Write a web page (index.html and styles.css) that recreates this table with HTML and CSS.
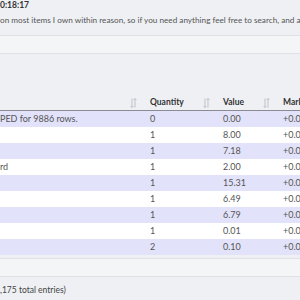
FILE: index.html
```html
<!DOCTYPE html>
<html>
<head>
<meta charset="utf-8">
<link rel="stylesheet" href="styles.css">
</head>
<body>
<div class="top">
  <div class="time">0:18:17</div>
  <div class="desc">on most items I own within reason, so if you need anything feel free to search, and ask</div>
</div>
<div class="band"></div>
<div class="gap"></div>
<table class="grid">
  <thead>
    <tr>
      <th class="c-name"><span class="lbl"></span><svg class="sort" viewBox="0 0 7 10"><path d="M2 0.5V9.5M0.6 8L2 9.5L3.4 8M5 9.5V0.5M3.6 2L5 0.5L6.4 2" fill="none" stroke="#bfc1c8" stroke-width="1"/></svg></th>
      <th class="c-qty"><span class="lbl">Quantity</span><svg class="sort" viewBox="0 0 7 10"><path d="M2 0.5V9.5M0.6 8L2 9.5L3.4 8M5 9.5V0.5M3.6 2L5 0.5L6.4 2" fill="none" stroke="#bfc1c8" stroke-width="1"/></svg></th>
      <th class="c-val"><span class="lbl">Value</span><svg class="sort" viewBox="0 0 7 10"><path d="M2 0.5V9.5M0.6 8L2 9.5L3.4 8M5 9.5V0.5M3.6 2L5 0.5L6.4 2" fill="none" stroke="#bfc1c8" stroke-width="1"/></svg></th>
      <th class="c-mkt"><span class="lbl">Markup</span></th>
    </tr>
  </thead>
  <tbody>
    <tr class="odd"><td class="c-name">PED for 9886 rows.</td><td>0</td><td>0.00</td><td>+0.00</td></tr>
    <tr class="even"><td class="c-name"></td><td>1</td><td>8.00</td><td>+0.00</td></tr>
    <tr class="odd"><td class="c-name"></td><td>1</td><td>7.18</td><td>+0.00</td></tr>
    <tr class="even"><td class="c-name">rd</td><td>1</td><td>2.00</td><td>+0.00</td></tr>
    <tr class="odd"><td class="c-name"></td><td>1</td><td>15.31</td><td>+0.00</td></tr>
    <tr class="even"><td class="c-name"></td><td>1</td><td>6.49</td><td>+0.00</td></tr>
    <tr class="odd"><td class="c-name"></td><td>1</td><td>6.79</td><td>+0.00</td></tr>
    <tr class="even"><td class="c-name"></td><td>1</td><td>0.01</td><td>+0.00</td></tr>
    <tr class="odd"><td class="c-name"></td><td>2</td><td>0.10</td><td>+0.00</td></tr>
  </tbody>
</table>
<div class="band band-bottom"></div>
<div class="info">,175 total entries)</div>
</body>
</html>
```

FILE: styles.css
```css
html, body {
  margin: 0;
  padding: 0;
  background: #eef0f3;
  overflow: hidden;
  width: 300px;
  height: 300px;
}
body {
  font-family: "Lato", "Liberation Sans", sans-serif;
  color: #444;
  font-size: 8px;
}
.top {
  white-space: nowrap;
}
.time {
  font-weight: bold;
  color: #333;
  height: 11px;
  line-height: 11px;
  font-size: 8.5px;
}
.desc {
  margin-top: 3px;
  height: 12px;
  line-height: 12px;
  font-size: 8.2px;
  color: #555;
}
.band {
  margin-top: 9px;
  height: 17px;
  background: #f4f5f7;
  border-top: 1px solid #dfe1e5;
  border-bottom: 1px solid #dfe1e5;
}
.gap {
  height: 40px;
}
.grid {
  border-collapse: separate;
  border-spacing: 0;
  width: 328px;
  table-layout: fixed;
  white-space: nowrap;
}
.grid th, .grid td {
  padding: 0 0 0 8px;
  height: 16px;
  line-height: 16px;
  text-align: left;
  overflow: hidden;
  box-sizing: border-box;
}
.grid th {
  font-weight: bold;
  font-size: 8.5px;
  color: #333;
  border-bottom: 1px solid #8a8c92;
  position: relative;
  height: 17px;
}
.grid td {
  color: #555;
  font-size: 9px;
}
.c-name { width: 142px; }
.grid .c-name { padding-left: 0; }
.c-qty { width: 73px; }
.c-val { width: 60px; }
.c-mkt { width: 53px; }
.sort {
  position: absolute;
  right: 5px;
  top: 4px;
  width: 7px;
  height: 10px;
}
.odd td { background: #e2e3fa; }
.even td { background: #ffffff; }
.band-bottom {
  margin-top: 3px;
}
.info {
  margin-top: 7px;
  line-height: 12px;
  color: #444;
  font-size: 8.5px;
}
```
